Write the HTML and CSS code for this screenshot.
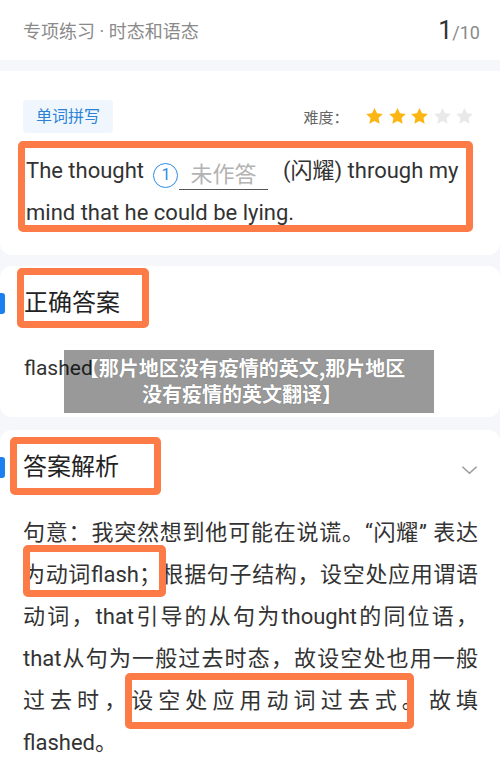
FILE: index.html
```html
<!DOCTYPE html>
<html lang="zh-CN">
<head>
<meta charset="utf-8">
<link rel="stylesheet" href="styles.css">
</head>
<body>
<header class="top">
  <div class="top-title">专项练习 · 时态和语态</div>
  <div class="top-count"><span class="cur">1</span><span class="tot">/10</span></div>
</header>

<section class="card card-q">
  <div class="q-row">
    <span class="tag">单词拼写</span>
    <div class="diff">
      <span class="diff-label">难度：</span>
      <svg class="star on" viewBox="0 0 24 24"><path d="M12 2.2l2.9 6.1 6.6.8-4.9 4.6 1.3 6.6L12 17l-5.9 3.3 1.3-6.6-4.9-4.6 6.6-.8z"/></svg>
      <svg class="star on" viewBox="0 0 24 24"><path d="M12 2.2l2.9 6.1 6.6.8-4.9 4.6 1.3 6.6L12 17l-5.9 3.3 1.3-6.6-4.9-4.6 6.6-.8z"/></svg>
      <svg class="star on" viewBox="0 0 24 24"><path d="M12 2.2l2.9 6.1 6.6.8-4.9 4.6 1.3 6.6L12 17l-5.9 3.3 1.3-6.6-4.9-4.6 6.6-.8z"/></svg>
      <svg class="star off" viewBox="0 0 24 24"><path d="M12 2.2l2.9 6.1 6.6.8-4.9 4.6 1.3 6.6L12 17l-5.9 3.3 1.3-6.6-4.9-4.6 6.6-.8z"/></svg>
      <svg class="star off" viewBox="0 0 24 24"><path d="M12 2.2l2.9 6.1 6.6.8-4.9 4.6 1.3 6.6L12 17l-5.9 3.3 1.3-6.6-4.9-4.6 6.6-.8z"/></svg>
    </div>
  </div>
  <p class="sentence">The thought <span class="blank"><span class="num">1</span><span class="ans">未作答</span></span> (闪耀) through my<br>mind that he could be lying.</p>
  <div class="mark mark-a"></div>
</section>

<section class="card card-ans">
  <h2 class="sec-title">正确答案</h2>
  <div class="answer">flashed</div>
  <div class="mark mark-b"></div>
  <div class="watermark">
    <span class="wm-line">【那片地区没有疫情的英文,那片地区</span>
    <span class="wm-line">没有疫情的英文翻译】</span>
  </div>
</section>

<section class="card card-exp">
  <div class="exp-head">
    <h2 class="sec-title">答案解析</h2>
    <svg class="chev" viewBox="0 0 18 10"><polyline points="1.5,1.5 9,8.5 16.5,1.5"/></svg>
  </div>
  <div class="exp">
    <span class="ln">句意：我突然想到他可能在说谎。“闪耀” 表达</span>
    <span class="ln">为动词flash；根据句子结构，设空处应用谓语</span>
    <span class="ln">动词，that引导的从句为thought的同位语，</span>
    <span class="ln">that从句为一般过去时态，故设空处也用一般</span>
    <span class="ln">过去时，设空处应用动词过去式。故填</span>
    <span class="ln last">flashed。</span>
  </div>
  <div class="mark mark-c"></div>
  <div class="mark mark-d"></div>
  <div class="mark mark-e"></div>
</section>
</body>
</html>
```

FILE: styles.css
```css
* { box-sizing: border-box; }
html, body { margin: 0; padding: 0; }
body {
  width: 500px;
  height: 763px;
  overflow: hidden;
  background: #f5f7fa;
  font-family: Roboto, "Noto Sans CJK SC", sans-serif;
  color: #323233;
}

.top {
  height: 60px;
  background: #fff;
  display: flex;
  align-items: center;
  justify-content: space-between;
  padding: 0 20px 0 23px;
}
.top-title { font-size: 18px; color: #8a8a8a; }
.top-count { display: flex; align-items: baseline; }
.top-count .cur { font-size: 25px; color: #333; }
.top-count .tot { font-size: 18px; color: #8a8a8a; }

.card {
  position: relative;
  background: #fff;
  border-radius: 12px;
}
.card-q { margin-top: 11px; padding: 29px 25px 21px 23px; border-radius: 0 0 12px 12px; }

.q-row { display: flex; align-items: center; justify-content: space-between; }
.tag {
  height: 33px;
  line-height: 33px;
  padding: 0 13px;
  background: #eff6fd;
  color: #2b83d6;
  border-radius: 4px;
  font-size: 16px;
}
.diff { display: flex; align-items: center; }
.diff-label { font-size: 15px; color: #666; margin-right: 14px; }
.star { width: 21px; height: 21px; margin-left: 1.5px; }
.star.on { fill: #fbb613; }
.star.off { fill: #e9e9e9; }

.sentence {
  margin: 17px 0 0;
  padding-left: 3px;
  font-size: 22px;
  line-height: 42px;
  white-space: nowrap;
}
.blank { display: inline-flex; align-items: center; margin: 0 9px 0 4px; vertical-align: -2px; }
.num {
  width: 25px;
  height: 25px;
  border: 1.5px solid #2d8ae6;
  border-radius: 50%;
  color: #2d8ae6;
  font-size: 16px;
  line-height: 22px;
  text-align: center;
}
.ans {
  width: 89px;
  margin-left: 1px;
  padding-left: 11px;
  color: #b3b3b3;
  border-bottom: 1px solid #555;
  line-height: 28px;
  font-size: 22px;
}

.card-ans { margin-top: 11px; padding: 19px 24px 34px 24px; }
.sec-title {
  position: relative;
  margin: 0;
  font-size: 24px;
  font-weight: 400;
  line-height: 36px;
  color: #222;
}
.sec-title::before {
  content: "";
  position: absolute;
  left: -24px;
  top: 8px;
  width: 5px;
  height: 21px;
  background: #1b7ff0;
  border-radius: 0 3px 3px 0;
}
.answer { margin-top: 32px; font-size: 21px; line-height: 30px; color: #333; }

.watermark {
  position: absolute;
  left: 64px;
  top: 84px;
  width: 370px;
  height: 63px;
  background: rgba(0, 0, 0, 0.4);
  color: #fff;
  font-family: "Noto Sans CJK SC", sans-serif;
  font-weight: 700;
  font-size: 20px;
  line-height: 26px;
  padding: 5px 14px 0 0;
  text-shadow: 0 0 1px rgba(0,0,0,0.35);
}
.wm-line { display: block; text-align: center; white-space: nowrap; }

.card-exp { margin-top: 13px; padding: 19px 22px 0 23px; border-radius: 12px 12px 0 0; }
.exp-head { display: flex; align-items: center; justify-content: space-between; }
.exp-head .sec-title::before { left: -23px; }
.chev { width: 17px; height: 10px; margin-top: 5px; fill: none; stroke: #9a9a9a; stroke-width: 1.6; }

.exp { margin-top: 27px; font-size: 22px; line-height: 42px; color: #333; }
.ln {
  display: block;
  white-space: nowrap;
  text-align: justify;
  text-align-last: justify;
  text-justify: inter-character;
  height: 42px;
}
.ln.last { text-align-last: left; }

.mark {
  position: absolute;
  border: 7px solid #fd7b47;
  border-radius: 5px;
  pointer-events: none;
}
.mark-a { left: 18px; top: 70px; width: 455px; height: 91px; }
.mark-b { left: 17px; top: 2px; width: 132px; height: 60px; }
.mark-c { left: 10px; top: 7px; width: 151px; height: 58px; }
.mark-d { left: 23px; top: 115px; width: 143px; height: 52px; }
.mark-e { left: 125px; top: 243px; width: 289px; height: 56px; }
```
